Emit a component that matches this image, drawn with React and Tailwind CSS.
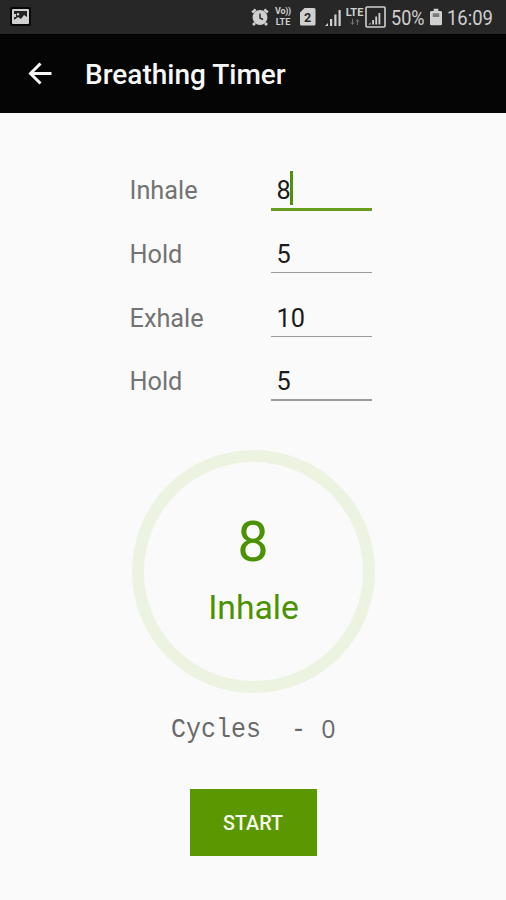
import React from "react";

const fields = [
  { label: "Inhale", value: "8", active: true },
  { label: "Hold", value: "5" },
  { label: "Exhale", value: "10" },
  { label: "Hold", value: "5" },
];

function StatusBar() {
  return (
    <div className="flex h-[35px] items-center bg-[#272727] border-b border-black text-[#d0d0d0]">
      <svg className="ml-[10px] h-[20px] w-[22px]" viewBox="0 0 22 20">
        <rect x="0" y="0" width="21" height="19" rx="2" fill="#080808" />
        <rect x="2" y="2" width="17" height="15" rx="1" fill="#d0d0d0" />
        <path d="M4 4h13v6l-3-2-3 4-3-2-4 3v-3h2v-3H4z" fill="#222" />
        <circle cx="8" cy="7.300" r="1.200" fill="#d0d0d0" />
      </svg>

      {/* alarm */}
      <svg className="ml-[219px] h-[18px] w-[18px]" viewBox="0 0 18 18" fill="none" stroke="currentColor">
        <circle cx="9" cy="9.500" r="7.400" fill="currentColor" stroke="none" />
        <path d="M1.200 4.500l3.500-3M16.800 4.500l-3.500-3M4 15l-2 2M14 15l2 2" strokeWidth="2.600" />
        <path d="M9 5.500v4.500l3 1.500" stroke="#272727" strokeWidth="1.400" />
      </svg>
      <div className="ml-[4px] flex h-[22px] w-[20px] flex-col items-center font-bold text-[9px] leading-[11px]">
        <span className="tracking-[-0.3px]">Vo))</span>
        <span>LTE</span>
      </div>
      {/* sim 2 */}
      <svg className="ml-[7px] h-[18px] w-[16px]" viewBox="0 0 16 18">
        <path d="M4.500 0H14a1.500 1.500 0 0 1 1.500 1.500V16a1.500 1.500 0 0 1-1.500 1.500H1.500A1.500 1.500 0 0 1 0 16V4.500z" fill="currentColor" />
        <text x="7.700" y="13.500" textAnchor="middle" fontSize="12.500" fontWeight="700" fill="#272727">2</text>
      </svg>
      <svg className="ml-[9px] h-[18px] w-[17px]" viewBox="0 0 17 18" fill="currentColor">
        <path d="M0 18l3-3v3z" />
        <rect x="5" y="11" width="2.200" height="7" />
        <rect x="9.300" y="6.500" width="2.200" height="11.500" />
        <rect x="13.500" y="2" width="2.200" height="16" />
      </svg>
      <div className="ml-[3px] flex h-[18px] w-[19px] flex-col items-center">
        <span className="text-[11px] font-bold leading-[10px]">LTE</span>
        <svg className="mt-[1px] h-[6px] w-[10px]" viewBox="0 0 10 6" stroke="#777" fill="none">
          <path d="M2.500 0v5M1 3.500l1.500 2 1.500-2M7.500 6V1M6 2.500l1.500-2 1.500 2" />
        </svg>
      </div>
      <svg className="ml-[1px] h-[22px] w-[21px]" viewBox="0 0 21 22" fill="currentColor">
        <rect x="1" y="1" width="19" height="20" rx="1" fill="none" stroke="currentColor" strokeWidth="1.600" />
        <path d="M3.500 18.500l2-2v2z" />
        <rect x="7.200" y="14" width="1.800" height="4.500" />
        <rect x="10.300" y="10.500" width="1.800" height="8" />
        <rect x="13.500" y="7" width="1.800" height="11.500" />
      </svg>
      <span className="ml-[5px] w-[34px] origin-left scale-x-[0.88] pt-[2px] text-[20.5px]">50%</span>
      <svg className="ml-[5px] h-[18px] w-[12px]" viewBox="0 0 13 18">
        <path d="M4 0h5v2.500h2.500A1.500 1.500 0 0 1 13 4v12.500a1.500 1.500 0 0 1-1.500 1.500h-10A1.500 1.500 0 0 1 0 16.500V4a1.500 1.500 0 0 1 1.500-1.500H4z" fill="currentColor" />
        <path d="M3 5h7v4H3z" fill="#777" />
      </svg>
      <span className="ml-[5px] w-[46px] origin-left scale-x-[0.9] pt-[2px] text-[20.5px]">16:09</span>
    </div>
  );
}

export default function App() {
  return (
    <div className="flex h-[900px] w-[506px] flex-col overflow-hidden bg-[#fafafa] font-['Roboto',sans-serif]">
      <StatusBar />

      <header className="flex h-[78px] items-center bg-[#050505] text-[#f8f8f8]">
        <svg className="ml-[28px] h-[24px] w-[24px]" viewBox="0 0 24 24" fill="none" stroke="currentColor" strokeWidth="3">
          <path d="M23.500 11.500H2.500M12.500 1.500L2.500 11.500 12.500 21.500" />
        </svg>
        <h1 className="ml-[33px] pt-[2px] text-[28px] font-medium leading-none">Breathing Timer</h1>
      </header>

      <main className="flex flex-col items-center">
        <div className="mt-[46px] mr-[5px] flex w-[242px] flex-col">
          {fields.map((field, i) => (
            <div key={i} className="flex h-[63.8px] items-start justify-between">
              <span className="pt-[14px] text-[25.3px] leading-[36px] text-[#737373]">{field.label}</span>
              <div className="flex h-[53px] w-[101px] flex-col">
                <div className="flex h-[49px] items-start pl-[6px] pt-[14px] text-[25.3px] leading-[36px] text-[#1c1c1c]">
                  {field.value}
                  {field.active && <span className="-ml-[1px] -mt-[2px] h-[34px] w-[3px] bg-[#4f9408]" />}
                </div>
                <div className={field.active ? "h-[3px] bg-[#6a9c1e]" : "h-[1.5px] bg-[#9c9c9c]"} />
              </div>
            </div>
          ))}
        </div>

        <div className="mt-[36px] flex h-[243px] w-[243px] flex-col items-center rounded-full border-[12px] border-[#edf3e1] text-[#4a9200]">
          <span className="mt-[47px] text-[56px] leading-[66px]">8</span>
          <span className="mt-[13px] ml-[1px] text-[33.7px] leading-[40px]">Inhale</span>
        </div>

        <p className="mt-[20px] ml-[1px] flex h-[32px] whitespace-pre text-[25px] leading-[32px] text-[#6a6a6a]">
          <span className="pt-[1px] scale-y-[1.12] font-['Liberation_Mono',monospace]">{"Cycles  - "}</span>
          <span className="-mt-[1px] flex w-[15px] justify-center font-['Open_Sans',sans-serif]">0</span>
        </p>

        <button className="mt-[44px] h-[67px] w-[127px] bg-[#5a9700] pt-[3px] text-[19.7px] font-medium text-[#f7faee]">
          START
        </button>
      </main>
    </div>
  );
}
